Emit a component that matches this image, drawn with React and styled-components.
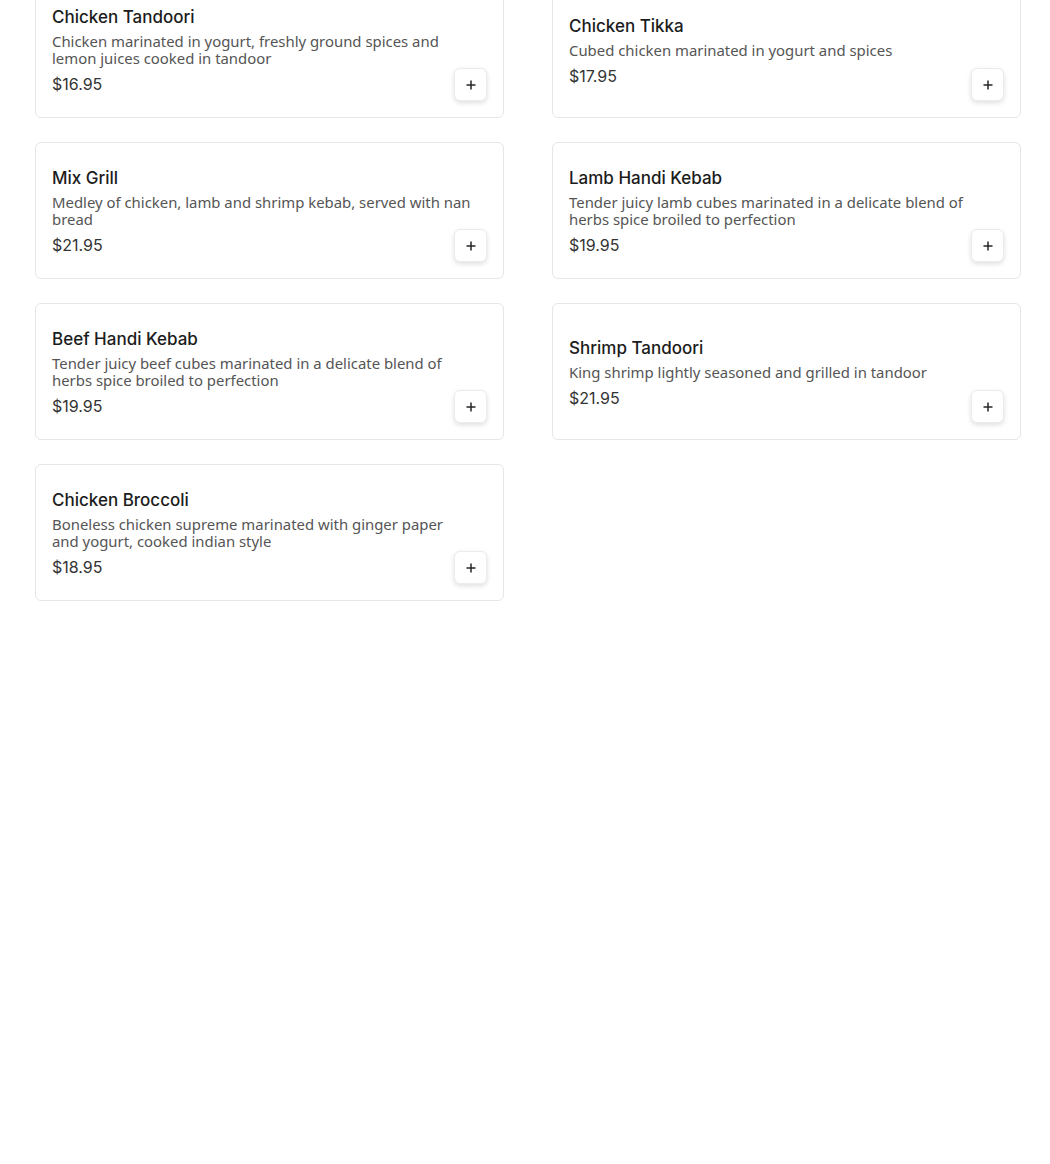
import React from "react";
import styled, { createGlobalStyle } from "styled-components";

const GlobalStyle = createGlobalStyle`
  html, body {
    margin: 0;
    padding: 0;
    background: #fff;
    font-family: Inter, "Noto Sans", sans-serif;
  }
`;

const items = [
  {
    name: "Chicken Tandoori",
    desc: "Chicken marinated in yogurt, freshly ground spices and lemon juices cooked in tandoor",
    price: "$16.95",
  },
  {
    name: "Chicken Tikka",
    desc: "Cubed chicken marinated in yogurt and spices",
    price: "$17.95",
  },
  {
    name: "Mix Grill",
    desc: "Medley of chicken, lamb and shrimp kebab, served with nan bread",
    price: "$21.95",
  },
  {
    name: "Lamb Handi Kebab",
    desc: "Tender juicy lamb cubes marinated in a delicate blend of herbs spice broiled to perfection",
    price: "$19.95",
  },
  {
    name: "Beef Handi Kebab",
    desc: "Tender juicy beef cubes marinated in a delicate blend of herbs spice broiled to perfection",
    price: "$19.95",
  },
  {
    name: "Shrimp Tandoori",
    desc: "King shrimp lightly seasoned and grilled in tandoor",
    price: "$21.95",
  },
  {
    name: "Chicken Broccoli",
    desc: "Boneless chicken supreme marinated with ginger paper and yogurt, cooked indian style",
    price: "$18.95",
  },
];

const Page = styled.div`
  padding: 0 30px 0 35px;
`;

const Grid = styled.div`
  margin-top: -19px;
  display: grid;
  grid-template-columns: 469px 469px;
  column-gap: 48px;
  row-gap: 24px;
`;

// info and button share one grid cell: text centred, button bottom-right
const Card = styled.div`
  box-sizing: border-box;
  min-height: 137px;
  border: 1px solid #e6e6e6;
  border-radius: 6px;
  background: #fff;
  padding: 16px;
  display: grid;
  grid-template-columns: 1fr;
  grid-template-rows: 1fr;
`;

const Info = styled.div`
  grid-area: 1 / 1;
  align-self: center;
  padding: 2px 14px 0 0;
  display: flex;
  flex-direction: column;
`;

const Title = styled.div`
  font-size: 17px;
  line-height: 22px;
  font-weight: 500;
  color: #1c1c1c;
  margin-bottom: 5px;
`;

const Desc = styled.div`
  font-family: "Noto Sans", Inter, sans-serif;
  font-size: 14.9px;
  line-height: 17px;
  color: #555;
  margin-bottom: 6px;
`;

const Price = styled.div`
  font-size: 16px;
  line-height: 22px;
  color: #333;
`;

const AddButton = styled.button`
  grid-area: 1 / 1;
  justify-self: end;
  align-self: end;
  width: 33px;
  height: 33px;
  padding: 0;
  border: 1px solid #ececec;
  border-radius: 6px;
  background: #fff;
  box-shadow: 0 2px 5px rgba(0, 0, 0, 0.13);
  display: flex;
  align-items: center;
  justify-content: center;
  cursor: pointer;
`;

const PlusIcon = () => (
  <svg width="10" height="10" viewBox="0 0 10 10">
    <path d="M5 0.5v9M0.5 5h9" stroke="#262626" strokeWidth="1.5" />
  </svg>
);

export default function App() {
  return (
    <Page>
      <GlobalStyle />
      <Grid>
        {items.map((item) => (
          <Card key={item.name}>
            <Info>
              <Title>{item.name}</Title>
              <Desc>{item.desc}</Desc>
              <Price>{item.price}</Price>
            </Info>
            <AddButton aria-label={`Add ${item.name}`}>
              <PlusIcon />
            </AddButton>
          </Card>
        ))}
      </Grid>
    </Page>
  );
}
